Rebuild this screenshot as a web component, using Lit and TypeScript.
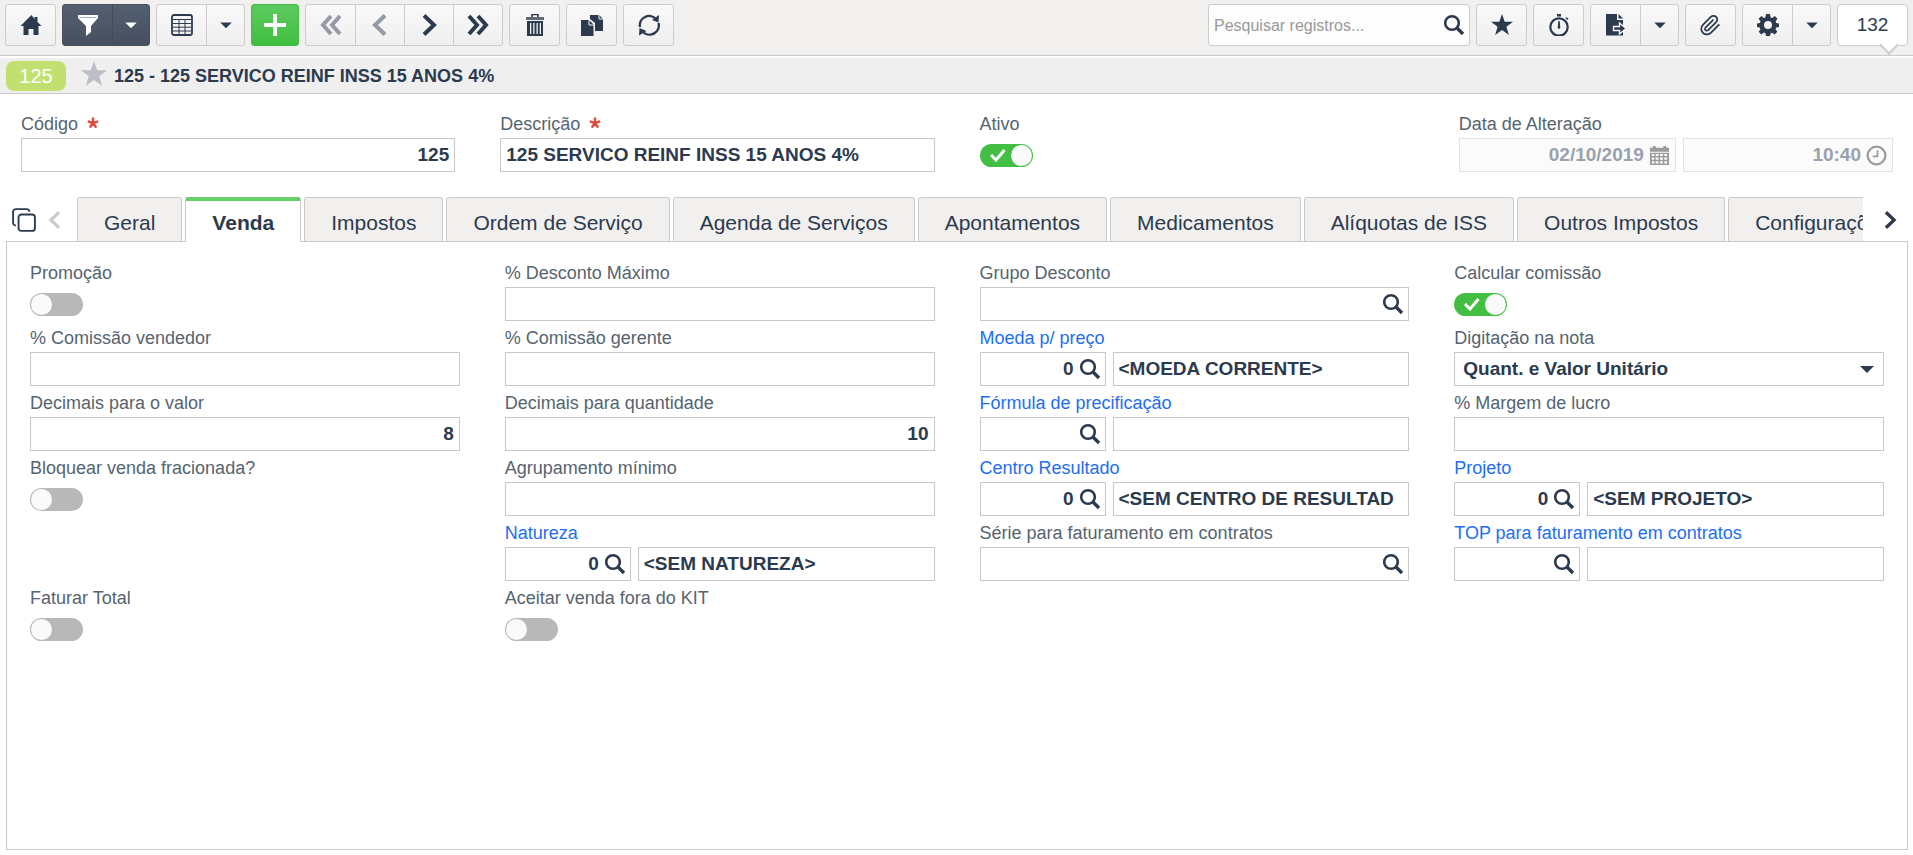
import { LitElement, html, css, svg, nothing } from "lit";
import { customElement, property } from "lit/decorators.js";
import { classMap } from "lit/directives/class-map.js";

const ICONS: Record<string, unknown> = {
  home: svg`<path d="M11 1 0 12h3v9h5v-6h5v6h5v-9h3l-4-4V3h-3v2z" transform="translate(.5 0)"/>`,
  funnel: svg`<path d="M1 1h20v3l-7 8v6l-5 4V12L1 4z"/><path d="M2.500 3.500h17" stroke="#4a5464" stroke-width=".8" opacity=".6"/>`,
  grid: svg`<rect x="1" y="1" width="20" height="20" rx="2" fill="none" stroke="currentColor" stroke-width="1.800"/><path d="M2 5.500h18M2 9.500h18M2 13.200h18M2 17h18M8 5.500V20M14 5.500V20" stroke="currentColor" stroke-width="1"/>`,
  plus: svg`<path d="M9 0h4v9h9v4h-9v9H9v-9H0V9h9z"/>`,
  first: svg`<path d="M11 2 3 11l8 9M20 2l-8 9 8 9" fill="none" stroke="currentColor" stroke-width="4"/>`,
  prev: svg`<path d="M16 1.500 6 11l10 9.500" fill="none" stroke="currentColor" stroke-width="4"/>`,
  next: svg`<path d="m6 1.500 10 9.500L6 20.500" fill="none" stroke="currentColor" stroke-width="4"/>`,
  last: svg`<path d="m2 2 8 9-8 9M11 2l8 9-8 9" fill="none" stroke="currentColor" stroke-width="4"/>`,
  trash: svg`<path d="M8 3V.500h6V3" fill="none" stroke="currentColor" stroke-width="1.600"/><path d="M2 3h18v3H2z" opacity=".75"/><path d="M3 7h16v15H3zM6 9v11h1.300V9zm3.200 0v11h1.300V9zm3.300 0v11h1.300V9zm3.200 0v11H17V9z" fill-rule="evenodd"/>`,
  copy: svg`<path d="M9 1h9l4 4v12h-8V9L9 5z"/><path d="M0 6h8l4.500 4.500V22H0z"/><path d="M8 5v6h5M18 1v4h4" fill="none" stroke="#f5f5f5" stroke-width="1"/>`,
  refresh: svg`<path d="M2 13A9.300 9.300 0 0 1 18 5M20.500 9A9.300 9.300 0 0 1 5 18" fill="none" stroke="currentColor" stroke-width="2.400"/><path d="m21 1-.5 7.500L14 6zM1 21.500 1.500 14l7 3z"/>`,
  search: svg`<circle cx="9" cy="9" r="6.800" fill="none" stroke="currentColor" stroke-width="2.600"/><path d="m14 14 6 6" stroke="currentColor" stroke-width="3.400"/>`,
  star: svg`<path d="m11 0 2.700 7.800H22l-6.600 5 2.500 8.200-6.900-5-6.900 5 2.500-8.200L0 7.800h8.300z"/>`,
  watch: svg`<circle cx="11" cy="13" r="8.700" fill="none" stroke="currentColor" stroke-width="2.200"/><path d="M9 0h4v2.500H9zM18.500 3l2 2-1 1-2-2zM10.300 7h1.400l.6 6.500a1.300 1.300 0 1 1-2.600 0z"/>`,
  export: svg`<path d="M1 0h11v6h6v15.500H1z"/><path d="m13.500 0 4.500 4.500h-4.500z"/><path d="M8.500 12.500h6V9l6.500 5.500-6.500 5.500v-3.500h-6z" stroke="#f4f4f4" stroke-width="1.400"/>`,
  clip: svg`<path d="m21.440 11.050-9.190 9.190a6 6 0 0 1-8.490-8.490l8.570-8.570A4 4 0 1 1 18 8.840l-8.590 8.570a2 2 0 0 1-2.830-2.830l8.490-8.480" transform="translate(-.6 0) scale(.93)" fill="none" stroke="currentColor" stroke-width="1.900"/>`,
  gear: svg`<path d="M9 0h4l.5 3.200 1.700.7L17.800 2l2.700 2.700-1.900 2.600.7 1.700L22 9.500v3.600l-2.800.5-.7 1.700 1.800 2.500-2.600 2.600-2.500-1.700-1.700.7L13 22H9l-.5-2.700-1.700-.7-2.500 1.800-2.600-2.600 1.700-2.500-.7-1.700L0 13V9.500l2.800-.5.7-1.700L1.600 4.700 4.300 2l2.500 1.900 1.700-.7zM11 7a4 4 0 1 0 0 8 4 4 0 0 0 0-8z" fill-rule="evenodd"/>`,
  windows: svg`<rect x="6" y="6" width="15" height="15" rx="2.500" fill="none" stroke="currentColor" stroke-width="1.700"/><path d="M3.500 16A2.500 2.500 0 0 1 1 13.500v-10A2.500 2.500 0 0 1 3.500 1h10A2.500 2.500 0 0 1 16 3.500" fill="none" stroke="currentColor" stroke-width="1.700"/>`,
  calendar: svg`<path d="M1 3h20v4H1zM4 1h3v3H4zM15 1h3v3h-3z"/><path d="M1 8h20v13H1zM3 9.500v2h2.500v-2zm4 0v2h3v-2zm4.500 0v2h3v-2zm4.500 0v2h3v-2zM3 13v2.500h2.500V13zm4 0v2.500h3V13zm4.500 0v2.500h3V13zm4.500 0v2.500h3V13zM3 17v2.500h2.500V17zm4 0v2.500h3V17zm4.500 0v2.500h3V17zm4.500 0v2.500h3V17z" fill-rule="evenodd"/>`,
  clock: svg`<circle cx="11" cy="11" r="9.300" fill="none" stroke="currentColor" stroke-width="2.400"/><path d="M12 5.500V12H7" fill="none" stroke="currentColor" stroke-width="1.800"/>`,
  caret: svg`<path d="M4 8h14l-7 7z"/>`,
  required: svg`<path d="M11 11V1M11 11l9.500-3M11 11l6 8.500M11 11l-6 8.500M11 11 1.500 8" stroke="currentColor" stroke-width="4.400"/>`,
};

const icon = (name: string, cls = "") =>
  html`<svg class="icon ${cls}" viewBox="0 0 22 22" fill="currentColor" aria-hidden="true">${ICONS[name]}</svg>`;

const iconStyles = css`
  * { box-sizing: border-box; }
  .icon { width: 22px; height: 22px; display: block; flex: none; }
  button { font: inherit; color: inherit; margin: 0; cursor: pointer; }
`;

interface Field {
  kind: "text" | "toggle" | "lookup" | "search" | "select" | "datetime" | "empty";
  label?: string;
  value?: string;
  text?: string;
  number?: boolean;
  on?: boolean;
  required?: boolean;
}

@customElement("form-field")
export class FormField extends LitElement {
  @property({ attribute: false }) field!: Field;

  static styles = [iconStyles, css`
    :host { display: block; min-width: 0; }
    .label { display: flex; align-items: center; gap: 9px; height: 20px; margin-bottom: 4px; font-size: 18px; line-height: 20px; color: #56646f; white-space: nowrap; width: max-content; text-decoration: none; }
    .label.link { color: #1d6ef5; }
    .required { width: 12px; height: 12px; margin-bottom: 2px; color: #de4a3c; }
    .row { display: flex; gap: 7px; height: 34px; }
    .box { display: flex; align-items: center; flex: 1; min-width: 0; height: 34px; border: 1px solid #c8c8c8; background: #fff; color: #2c3a4e; }
    .box.code { flex: none; width: 126px; }
    .box.off { background: #fbfbfb; border-color: #e3e3e3; color: #9aa0ad; }
    .box.date { flex: 217; }
    .box.time { flex: 210; }
    input.value, select { flex: 1; min-width: 0; width: 100%; height: 32px; padding: 0 5px; border: 0; outline: 0; background: transparent; color: inherit; font: bold 19px/22px "Liberation Sans", Arial, sans-serif; opacity: 1; }
    input.number { text-align: right; }
    select { appearance: none; padding: 0 8px; }
    .glass { display: flex; padding: 0 4px 0 0; border: 0; background: none; }
    .off .icon { width: 21px; height: 21px; margin-right: 5px; color: #9b9b9b; }
    .arrow { margin-right: 5px; }
    .switch { position: relative; display: block; width: 53px; height: 23px; margin: 10px 0 5px; border-radius: 12px; background: #b8b8b8; }
    .switch input { appearance: none; width: 100%; height: 100%; margin: 0; display: block; cursor: pointer; }
    .knob { position: absolute; top: 1px; left: 1px; width: 21px; height: 21px; border-radius: 50%; background: #fafafa; pointer-events: none; }
    .switch.on { background: #42bf42; }
    .switch.on .knob { left: auto; right: 1px; }
    .tick { position: absolute; left: 9px; top: 4px; width: 18px; height: 14px; pointer-events: none; }
  `];

  private control() {
    const f = this.field;
    const text = (id: string, value = "", number = false, label = "") =>
      html`<input id=${id} class=${classMap({ value: true, number })} .value=${value} aria-label=${label || f.label || ""} />`;
    const glass = html`<button class="glass" aria-label="Pesquisar ${f.label}">${icon("search")}</button>`;
    switch (f.kind) {
      case "toggle":
        return html`<div class=${classMap({ switch: true, on: !!f.on })}>
          <input id="c" type="checkbox" role="switch" .checked=${!!f.on} />
          ${f.on ? html`<svg class="tick" viewBox="0 0 18 14"><path d="m2 7 5 5 8.500-10" fill="none" stroke="#fff" stroke-width="3" /></svg>` : nothing}
          <span class="knob"></span>
        </div>`;
      case "lookup":
        return html`<div class="row">
          <div class="box code">${text("c", f.value, true)}${glass}</div>
          <div class="box">${text("d", f.text, false, "Nome " + f.label)}</div>
        </div>`;
      case "search":
        return html`<div class="row"><div class="box">${text("c")}${glass}</div></div>`;
      case "select":
        return html`<div class="row"><div class="box">
          <select id="c"><option>${f.value}</option></select>${icon("caret", "arrow")}
        </div></div>`;
      case "datetime":
        return html`<div class="row">
          <div class="box off date"><input id="c" class="value number" readonly .value=${f.value ?? ""} />${icon("calendar")}</div>
          <div class="box off time"><input class="value number" readonly aria-label="Hora" .value=${f.text ?? ""} />${icon("clock")}</div>
        </div>`;
      default:
        return html`<div class="row"><div class="box">${text("c", f.value, f.number)}</div></div>`;
    }
  }

  render() {
    const f = this.field;
    if (f.kind === "empty") return nothing;
    return html`
      ${f.kind === "lookup"
        ? html`<a class="label link" href="#">${f.label}</a>`
        : html`<label class="label" for="c">${f.label}${f.required ? icon("required", "required") : nothing}</label>`}
      ${this.control()}`;
  }
}

const HEADER: Field[] = [
  { kind: "text", label: "Código", value: "125", number: true, required: true },
  { kind: "text", label: "Descrição", value: "125 SERVICO REINF INSS 15 ANOS 4%", required: true },
  { kind: "toggle", label: "Ativo", on: true },
  { kind: "datetime", label: "Data de Alteração", value: "02/10/2019", text: "10:40" },
];

const FIELDS: Field[] = [
  { kind: "toggle", label: "Promoção" },
  { kind: "text", label: "% Desconto Máximo" },
  { kind: "search", label: "Grupo Desconto" },
  { kind: "toggle", label: "Calcular comissão", on: true },
  { kind: "text", label: "% Comissão vendedor" },
  { kind: "text", label: "% Comissão gerente" },
  { kind: "lookup", label: "Moeda p/ preço", value: "0", text: "<MOEDA CORRENTE>" },
  { kind: "select", label: "Digitação na nota", value: "Quant. e Valor Unitário" },
  { kind: "text", label: "Decimais para o valor", value: "8", number: true },
  { kind: "text", label: "Decimais para quantidade", value: "10", number: true },
  { kind: "lookup", label: "Fórmula de precificação" },
  { kind: "text", label: "% Margem de lucro" },
  { kind: "toggle", label: "Bloquear venda fracionada?" },
  { kind: "text", label: "Agrupamento mínimo" },
  { kind: "lookup", label: "Centro Resultado", value: "0", text: "<SEM CENTRO DE RESULTAD" },
  { kind: "lookup", label: "Projeto", value: "0", text: "<SEM PROJETO>" },
  { kind: "empty" },
  { kind: "lookup", label: "Natureza", value: "0", text: "<SEM NATUREZA>" },
  { kind: "search", label: "Série para faturamento em contratos" },
  { kind: "lookup", label: "TOP para faturamento em contratos" },
  { kind: "toggle", label: "Faturar Total" },
  { kind: "toggle", label: "Aceitar venda fora do KIT" },
];

const TABS = ["Geral", "Venda", "Impostos", "Ordem de Serviço", "Agenda de Serviços", "Apontamentos", "Medicamentos", "Alíquotas de ISS", "Outros Impostos", "Configurações"];

@customElement("app-root")
export class AppRoot extends LitElement {
  static styles = [iconStyles, css`
    :host { display: flex; flex-direction: column; min-height: 100vh; padding-bottom: 5px; box-sizing: border-box; background: #fff; color: #2c3a4e; font-family: "Liberation Sans", Arial, sans-serif; }
    .toolbar { display: flex; gap: 6px; padding: 4px 5px 9px; background: #f1f0ee; border-bottom: 1px solid #c9c9c9; }
    .group { display: flex; height: 42px; border: 1px solid #cdcccb; border-radius: 3px; background: linear-gradient(#f9f9f9, #efefef); }
    .group button { display: flex; align-items: center; justify-content: center; width: 49px; padding: 0; border: 0; background: none; }
    .group button + button { border-left: 1px solid #cdcccb; }
    .group button.more { width: 38px; }
    .more .icon { width: 18px; height: 18px; }
    .group.dark { background: linear-gradient(#535f71, #46505f); border-color: #46505f; color: #fff; }
    .group.dark button.more { width: 37px; border-color: #414b5a; }
    .group.green { background: linear-gradient(#5dcb60, #40be40); border-color: #40bd40; color: #fff; }
    .group.green button { width: 46px; }
    button.dim { color: #939aa6; }
    .search { display: flex; align-items: center; width: 262px; height: 42px; margin-left: auto; padding: 0 4px 0 5px; border: 1px solid #cdcccb; border-radius: 3px; background: #fdfdfd; }
    .search input { flex: 1; min-width: 0; padding: 1px 0 0; border: 0; outline: 0; background: none; font: 16px/20px "Liberation Sans", Arial, sans-serif; }
    .search input::placeholder { color: #999; opacity: 1; }
    .search button { padding: 0; border: 0; background: none; }
    .count { position: relative; display: flex; align-items: center; justify-content: center; width: 71px; height: 42px; border: 1px solid #cdcccb; border-radius: 4px; background: #fff; font-size: 19px; }
    .count::after { content: ""; position: absolute; right: 11px; bottom: -7px; width: 12px; height: 12px; background: #fff; border: solid #cdcccb; border-width: 0 2px 2px 0; transform: rotate(45deg); }
    .titlebar { display: flex; align-items: center; height: 38px; padding-left: 6px; border-top: 2px solid #fff; border-bottom: 1px solid #c9c9c9; background: #efefef; }
    .pill { width: 60px; height: 30px; border-radius: 8px; background: #c0e170; color: #fff; font-size: 20px; line-height: 30px; text-align: center; }
    .fav { display: flex; margin: 0 7px 4px 15px; padding: 0; border: 0; background: none; color: #bcbfc7; }
    .fav .icon { width: 26px; height: 26px; }
    h1 { margin: 0; font-size: 18px; line-height: 22px; }
    .grid { display: grid; grid-template-columns: repeat(4, minmax(0, 1fr)); gap: 7px 45px; }
    .header { padding: 20px 20px 25px 21px; }
    .tabs { position: relative; z-index: 1; display: flex; height: 45px; margin: 0 6px -1px; }
    .tabs > button { display: flex; align-items: center; padding: 0; border: 0; background: none; }
    .tabs > .windows { width: 34px; padding-left: 6px; }
    .windows .icon { width: 24px; height: 24px; }
    .tabs > .back { width: 37px; padding-left: 6px; color: #c9ccd1; }
    .back .icon, .forward .icon { width: 18px; height: 18px; }
    .tabs > .forward { width: 44px; padding-left: 10px; justify-content: center; }
    .strip { display: flex; flex: 1; min-width: 0; gap: 3px; overflow: hidden; }
    .tab { flex: none; height: 44px; padding: 6px 26px 0; border: 1px solid #cdcaca; border-bottom: 0; border-radius: 3px 3px 0 0; background: #f1f0ef; font-size: 21px; line-height: 24px; white-space: nowrap; }
    .tab.active { height: 45px; padding-top: 2px; border-top: 4px solid #66cf6a; background: #fff; font-weight: bold; }
    .panelwrap { flex: 1; display: flex; margin: 0 5px 0 6px; }
    .panel { flex: 1; align-content: start; padding: 21px 23px; border: 1px solid #c9c9c9; }
  `];

  private group(cls: string, ...items: [string, string, string?][]) {
    return html`<div class="group ${cls}">
      ${items.map(([name, label, c]) => html`<button class=${c ?? ""} aria-label=${label}>${icon(name)}</button>`)}
    </div>`;
  }

  render() {
    return html`
      <div class="toolbar" role="toolbar" aria-label="Ações">
        ${this.group("", ["home", "Início"])}
        ${this.group("dark", ["funnel", "Filtrar"], ["caret", "Mais filtros", "more"])}
        ${this.group("", ["grid", "Grade"], ["caret", "Mais grades", "more"])}
        ${this.group("green", ["plus", "Novo"])}
        ${this.group("", ["first", "Primeiro", "dim"], ["prev", "Anterior", "dim"], ["next", "Próximo"], ["last", "Último"])}
        ${this.group("", ["trash", "Excluir"])}
        ${this.group("", ["copy", "Duplicar"])}
        ${this.group("", ["refresh", "Atualizar"])}
        <div class="search">
          <input placeholder="Pesquisar registros..." aria-label="Pesquisar registros" />
          <button aria-label="Pesquisar">${icon("search")}</button>
        </div>
        ${this.group("", ["star", "Favoritos"])}
        ${this.group("", ["watch", "Agendar"])}
        ${this.group("", ["export", "Exportar"], ["caret", "Mais exportações", "more"])}
        ${this.group("", ["clip", "Anexos"])}
        ${this.group("", ["gear", "Configurar"], ["caret", "Mais opções", "more"])}
        <div class="count">132</div>
      </div>
      <div class="titlebar">
        <span class="pill">125</span>
        <button class="fav" aria-label="Favorito">${icon("star")}</button>
        <h1>125 - 125 SERVICO REINF INSS 15 ANOS 4%</h1>
      </div>
      <div class="grid header">${HEADER.map((f) => html`<form-field .field=${f}></form-field>`)}</div>
      <div class="tabs">
        <button class="windows" aria-label="Abas">${icon("windows")}</button>
        <button class="back" aria-label="Abas anteriores">${icon("prev")}</button>
        <div class="strip" role="tablist">
          ${TABS.map((t) => html`<button role="tab" class=${classMap({ tab: true, active: t === "Venda" })} aria-selected=${t === "Venda"}>${t}</button>`)}
        </div>
        <button class="forward" aria-label="Próximas abas">${icon("next")}</button>
      </div>
      <div class="panelwrap">
        <div class="grid panel" role="tabpanel">${FIELDS.map((f) => html`<form-field .field=${f}></form-field>`)}</div>
      </div>`;
  }
}
